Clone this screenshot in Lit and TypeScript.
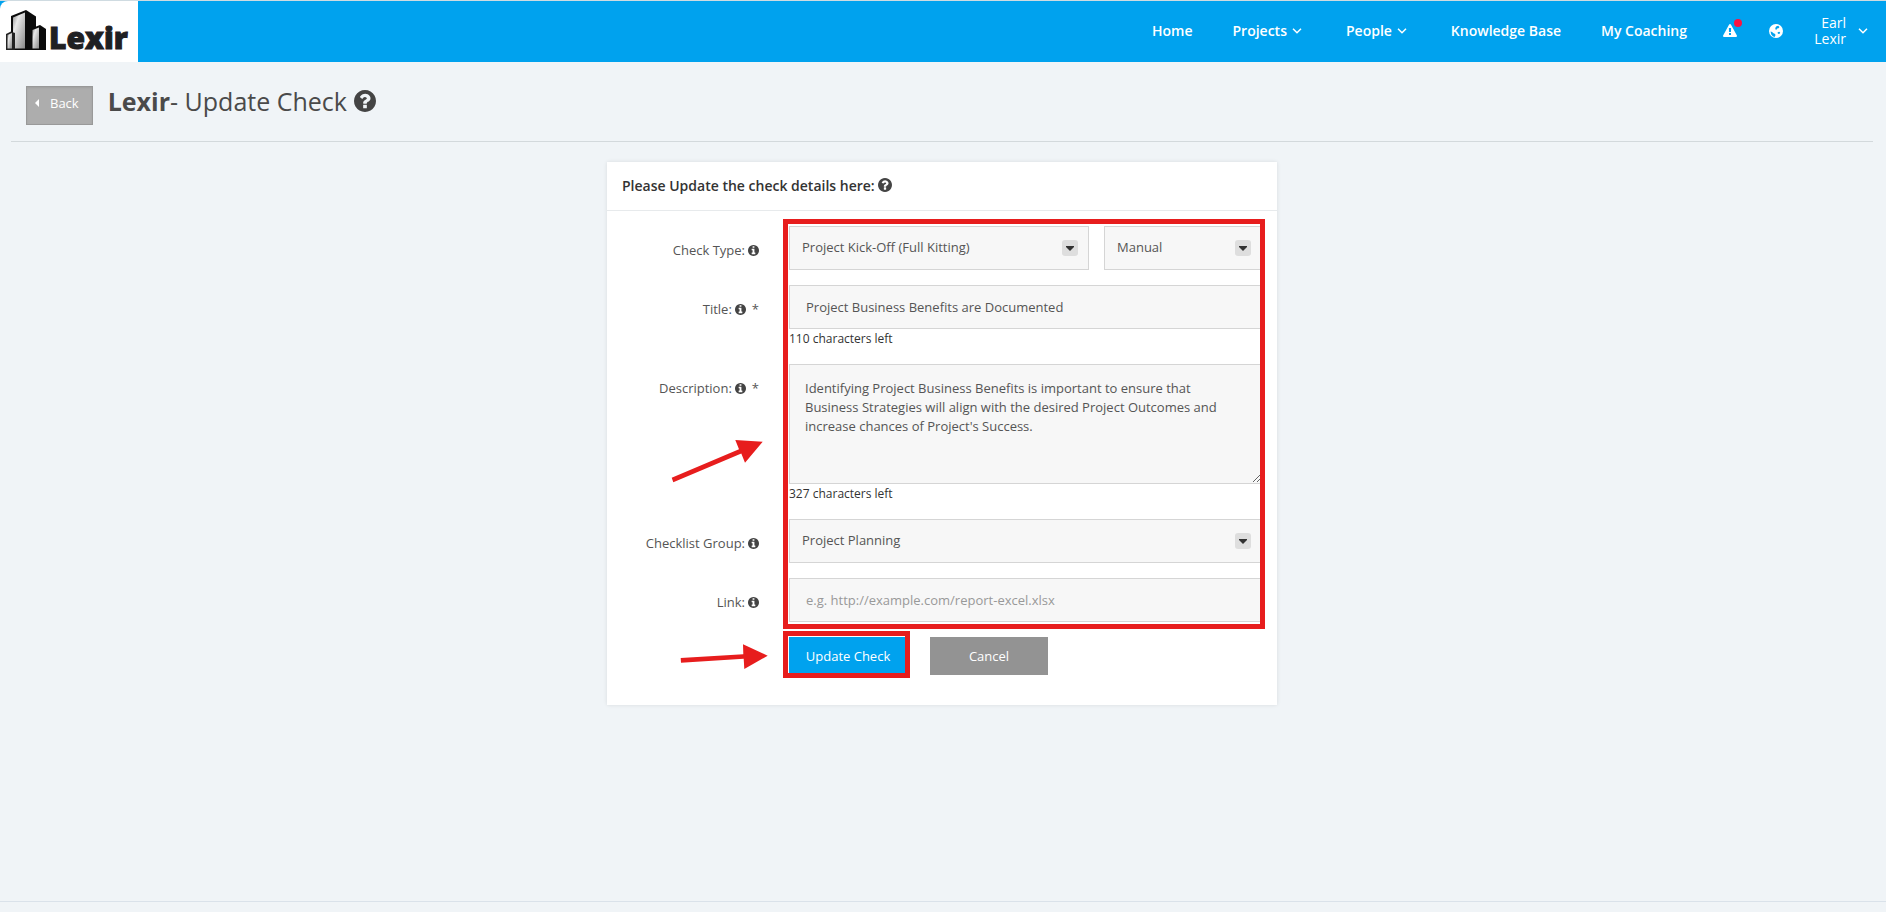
import { LitElement, html, css } from "lit";
import { customElement, property, state } from "lit/decorators.js";

const RING =
  "m640 416q0 209-103 385.500t-279.500 279.500-385.500 103-385.500-103-279.500-279.500-103-385.500 103-385.500 279.500-279.500 385.500-103 385.500 103 279.500 279.500 103 385.500z";

const ICONS: Record<string, string> = {
  question:
    "M1024 1376v-192q0-14-9-23t-23-9h-192q-14 0-23 9t-9 23v192q0 14 9 23t23 9h192q14 0 23-9t9-23zm256-672q0-88-55.500-163t-138.500-116-170-41q-243 0-371 213-15 24 8 42l132 100q7 6 19 6 16 0 25-12 53-68 86-92 34-24 86-24 48 0 85.500 26t37.500 59q0 38-20 61t-68 45q-63 28-115.500 86.500t-52.500 125.500v36q0 14 9 23t23 9h192q14 0 23-9t9-23q0-19 21.500-49.500t54.500-49.500q32-18 49-28.500t46-35 44.500-48 28-60.500 12.500-81zm384 192q0 209-103 385.500t-279.500 279.500-385.500 103-385.500-103-279.500-279.500-103-385.500 103-385.500 279.500-279.500 385.500-103 385.500 103 279.500 279.500 103 385.500z",
  info:
    "M1152 1376v-160q0-14-9-23t-23-9h-96v-512q0-14-9-23t-23-9h-320q-14 0-23 9t-9 23v160q0 14 9 23t23 9h96v320h-96q-14 0-23 9t-9 23v160q0 14 9 23t23 9h448q14 0 23-9t9-23zm-128-896v-160q0-14-9-23t-23-9h-192q-14 0-23 9t-9 23v160q0 14 9 23t23 9h192q14 0 23-9t9-23z" +
    RING,
  warning:
    "M1024 1375v-190q0-14-9.500-23.500t-22.500-9.500h-192q-13 0-22.500 9.500t-9.500 23.500v190q0 14 9.500 23.500t22.500 9.500h192q13 0 22.500-9.500t9.500-23.500zm-2-374l18-459q0-12-10-19-13-11-24-11h-220q-11 0-24 11-10 7-10 21l17 457q0 10 10 16.500t24 6.500h185q14 0 23.500-6.500t10.500-16.500zm-14-934l768 1408q35 63-2 126-17 29-46.500 46t-63.500 17h-1536q-34 0-63.500-17t-46.500-46q-37-63-2-126l768-1408q17-31 47-49t65-18 65 18 47 49z",
};

@customElement("fa-icon")
class FaIcon extends LitElement {
  static styles = css`
    :host { display: inline-flex; }
    .glyph { width: 100%; height: 100%; fill: currentColor; display: block; }
  `;
  @property() name = "info";
  render() {
    const box = this.name === "warning" ? "0 0 1792 1792" : "128 128 1536 1536";
    return html`<svg class="glyph" viewBox=${box} aria-hidden="true"><path d=${ICONS[this.name]}></path></svg>`;
  }
}

const chevron = html`<svg class="chevron" viewBox="0 0 10 6" aria-hidden="true"><path d="M1 .8 5 4.800 9 .8"></path></svg>`;

@customElement("site-header")
class SiteHeader extends LitElement {
  static styles = css`
    :host { display: block; }
    .bar { display: flex; height: 61px; border-top: 1px solid #cfdbe1; background: #00a2ee; color: #fff; }
    .logo { width: 138px; background: #fff; border-top-left-radius: 8px; }
    .mark { display: block; width: 138px; height: 61px; }
    .wordmark { font: 800 30px "Open Sans", sans-serif; fill: #1f2023; stroke: #1f2023; stroke-width: 1px; }
    .nav { display: flex; align-items: center; margin-left: auto; padding: 0 18px 2px 0; font-size: 14px; font-weight: 500; line-height: 16px; }
    .link { display: flex; align-items: center; gap: 5px; padding: 0 20px; color: inherit; text-decoration: none; white-space: nowrap; font-weight: 600; }
    .menu { padding-right: 24px; }
    .chevron { width: 10px; height: 6px; fill: none; stroke: #fff; stroke-width: 1.5; }
    .tool { display: block; position: relative; padding: 0 16px; color: inherit; height: 16px; }
    .tool fa-icon, .globe { display: block; width: 14px; height: 16px; }
    .dot { position: absolute; top: -4px; right: 11px; width: 8px; height: 8px; border-radius: 50%; background: #fb1340; }
    .user { display: flex; align-items: center; gap: 12px; padding-left: 13px; text-align: right; color: inherit; text-decoration: none; }
    .name { width: 34px; }
  `;
  render() {
    return html`
      <header class="bar">
        <a class="logo" href="#" aria-label="Lexir">
          <svg class="mark" viewBox="0 1 138 61">
            <defs>
              <linearGradient id="face" x1="0" y1="0" x2="1" y2="1">
                <stop offset="0" stop-color="#8d8d8d"></stop>
                <stop offset=".3" stop-color="#e8e8e8"></stop>
                <stop offset="1" stop-color="#8a8a8a"></stop>
              </linearGradient>
            </defs>
            <path d="M11 16 26 10 36 16.500V50H11z" fill="#0b0b0b"></path>
            <path d="M13 17.500 25 12.500V48.500H13z" fill="url(#face)"></path>
            <path d="M6 34 11 31.500 15 33V50H6z" fill="#222"></path>
            <path d="M7.500 35 12 33V48.500H7.500z" fill="url(#face)"></path>
            <path d="M31 28.500 40 25 46 29V50H31z" fill="#0b0b0b"></path>
            <path d="M32.500 30 39 27.500V48.500H32.500z" fill="url(#face)"></path>
            <text class="wordmark" x="49" y="49">Lexir</text>
          </svg>
        </a>
        <nav class="nav">
          <a class="link" href="#">Home</a>
          <a class="link menu" href="#">Projects${chevron}</a>
          <a class="link menu" href="#">People${chevron}</a>
          <a class="link" href="#">Knowledge Base</a>
          <a class="link" href="#">My Coaching</a>
          <a class="tool" href="#" aria-label="Alerts"><fa-icon name="warning"></fa-icon><span class="dot"></span></a>
          <a class="tool" href="#" aria-label="Language">
            <svg class="globe" viewBox="0 0 14 16" aria-hidden="true">
              <circle cx="7" cy="8" r="7" fill="#fff"></circle>
              <path d="M7.500 3.200 9.200 2.800 10.500 4 9.500 5.200 8.200 5.400 7.500 6.800 6.200 6.200 6.500 4.500zM1.500 8.500l1.600.4 1.400 1.300 1.700.8.200 1.500-.8 1.500-1.800-.8-1.500-1.800zM8.600 9.200l1.600-.4 1 .8-.8 1.400-1.500-.2z" fill="#00a2ee"></path>
            </svg>
          </a>
          <a class="user" href="#"><span class="name">Earl Lexir</span>${chevron}</a>
        </nav>
      </header>
    `;
  }
}

@customElement("check-form")
class CheckForm extends LitElement {
  static styles = css`
    :host { display: block; max-width: 670px; margin: 20px auto 0; background: #fff; box-shadow: 0 0 4px rgba(0, 0, 0, 0.1); font-size: 13px; line-height: 19px; color: #555; }
    * { box-sizing: border-box; }
    .heading { display: flex; align-items: center; gap: 3px; margin: 0; height: 49px; padding: 0 15px 2px; border-bottom: 1px solid #e7eaec; font-size: 14px; font-weight: 600; color: #333; }
    .heading fa-icon { width: 14px; height: 14px; color: #444; }
    .form { display: grid; grid-template-columns: 137px minmax(0, 1fr); column-gap: 30px; row-gap: 15px; padding: 15px 15px 30px; position: relative; }
    .label { display: flex; justify-content: flex-end; align-items: center; align-self: start; gap: 3px; padding-top: 15px; white-space: nowrap; }
    .label fa-icon { width: 11px; height: 11px; color: #444; }
    .star { padding-left: 3px; }
    .pair { display: grid; grid-template-columns: minmax(0, 1fr) 158px; gap: 15px; }
    .pick { position: relative; display: block; }
    .badge { position: absolute; top: 14px; right: 11px; width: 16px; height: 16px; border-radius: 3px; background: #dedede; pointer-events: none; }
    .badge path { fill: #333; }
    .box { display: block; width: 100%; height: 44px; margin: 0; border: 1px solid #d5d5d5; border-radius: 0; background: #f7f7f7; font: inherit; color: #555; outline: none; appearance: none; }
    .choice { padding: 0 36px 2px 12px; }
    .line { padding: 0 16px; }
    .line::placeholder { color: #999; }
    .area { height: 120px; padding: 14px 15px; resize: both; }
    .count { display: block; height: 20px; font-size: 12px; line-height: 20px; color: #333; }
    .actions { grid-column: 2; display: flex; gap: 23px; }
    .button { width: 118px; height: 38px; padding: 0; border: 0; background: #00a2ee; color: #fff; font: inherit; }
    .plain { background: #939393; }
    .mark { position: absolute; border: 5px solid #e71d1d; pointer-events: none; }
    .around-fields { grid-column: 2 / 3; grid-row: 1 / 6; inset: -7px -3px -7px -6px; }
    .primary { position: relative; display: block; }
    .around-button { inset: -6px -3px -3px -6px; }
    .arrow { position: absolute; fill: #e71d1d; pointer-events: none; }
    .to-fields { grid-column: 1 / 2; grid-row: 3 / 4; top: 75px; right: -5px; width: 93px; height: 45px; }
    .to-button { grid-column: 1 / 2; grid-row: 6 / 7; top: 6px; right: -10px; width: 90px; height: 28px; }
  `;

  @state() private titleText = "Project Business Benefits are Documented";
  @state() private description =
    "Identifying Project Business Benefits is important to ensure that Business Strategies will align with the desired Project Outcomes and increase chances of Project's Success.";

  private label(target: string, text: string, required = false) {
    return html`<label class="label" for=${target}>${text}<fa-icon name="info"></fa-icon>${required ? html`<span class="star">*</span>` : ""}</label>`;
  }

  private select(id: string, value: string, name: string) {
    return html`<span class="pick">
      <select class="box choice" id=${id} aria-label=${name}><option>${value}</option></select>
      <svg class="badge" viewBox="0 0 16 16" aria-hidden="true"><path d="M4 6h8v1l-4 4-4-4z"></path></svg>
    </span>`;
  }

  render() {
    return html`
      <h2 class="heading">Please Update the check details here:<fa-icon name="question"></fa-icon></h2>
      <form class="form" @submit=${(e: Event) => e.preventDefault()}>
        ${this.label("type", "Check Type:")}
        <div class="pair">
          ${this.select("type", "Project Kick-Off (Full Kitting)", "Check Type")}
          ${this.select("mode", "Manual", "Check mode")}
        </div>
        ${this.label("title", "Title:", true)}
        <div>
          <input class="box line" id="title" .value=${this.titleText}
            @input=${(e: Event) => (this.titleText = (e.target as HTMLInputElement).value)} />
          <span class="count">${150 - this.titleText.length} characters left</span>
        </div>
        ${this.label("description", "Description:", true)}
        <div>
          <textarea class="box area" id="description" .value=${this.description}
            @input=${(e: Event) => (this.description = (e.target as HTMLTextAreaElement).value)}></textarea>
          <span class="count">${500 - this.description.length} characters left</span>
        </div>
        ${this.label("group", "Checklist Group:")}
        ${this.select("group", "Project Planning", "Checklist Group")}
        ${this.label("link", "Link:")}
        <input class="box line" id="link" placeholder="e.g. http://example.com/report-excel.xlsx" />
        <div class="actions">
          <span class="primary">
            <button class="button" type="submit">Update Check</button>
            <span class="mark around-button"></span>
          </span>
          <button class="button plain" type="button">Cancel</button>
        </div>
        <span class="mark around-fields"></span>
        <svg class="arrow to-fields" viewBox="671 439 93 45" aria-hidden="true">
          <path d="M671.700 477.700 739 449.300 735.300 440 762.700 441.700 745 462.700 741.300 453.500 673.300 482.300z"></path>
        </svg>
        <svg class="arrow to-button" viewBox="679 643 90 28" aria-hidden="true">
          <path d="M680.700 658 743.300 654.300 743 644.300 767.700 655.700 744.300 669 743.700 658.700 681 662.700z"></path>
        </svg>
      </form>
    `;
  }
}

@customElement("app-root")
class AppRoot extends LitElement {
  static styles = css`
    :host { display: flex; flex-direction: column; min-height: 100vh; background: #f0f4f7; font-family: "Open Sans", sans-serif; color: #4a4a4a; }
    .page { flex: 1; padding: 0 13px 0 11px; }
    .top { display: flex; align-items: flex-start; gap: 15px; padding: 24px 15px 16px; border-bottom: 1px solid #d3d9dc; }
    .back { display: flex; align-items: center; gap: 11px; height: 39px; padding: 0 13px 6px 8px; border: 1px solid #999; border-radius: 0; background: #adadad; color: #fff; font: 13px "Open Sans", sans-serif; box-shadow: inset 0 1px 2px rgba(0, 0, 0, 0.08); }
    .caret { width: 4px; height: 8px; fill: #fff; }
    .title { display: flex; align-items: center; margin: 0; font-size: 25px; line-height: 30px; font-weight: 400; }
    .title fa-icon { width: 22px; height: 22px; margin-left: 7px; color: #444; }
    .foot { height: 10px; border-top: 1px solid #dae2ea; }
  `;
  render() {
    return html`
      <site-header></site-header>
      <main class="page">
        <div class="top">
          <button class="back"><svg class="caret" viewBox="0 0 4 8" aria-hidden="true"><path d="M4 0v8L0 4z"></path></svg>Back</button>
          <h1 class="title"><span><b>Lexir</b>- Update Check</span><fa-icon name="question"></fa-icon></h1>
        </div>
        <check-form></check-form>
      </main>
      <footer class="foot"></footer>
    `;
  }
}
